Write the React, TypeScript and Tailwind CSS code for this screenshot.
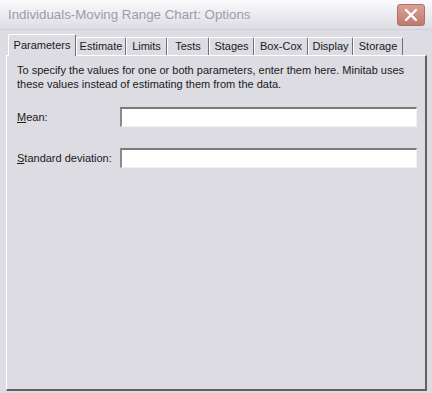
import React from 'react';

const tabs = [
  { label: 'Parameters', w: 'w-[68px]' },
  { label: 'Estimate', w: 'w-[50px]' },
  { label: 'Limits', w: 'w-[41px]' },
  { label: 'Tests', w: 'w-[42px]' },
  { label: 'Stages', w: 'w-[45px]' },
  { label: 'Box-Cox', w: 'w-[54px]' },
  { label: 'Display', w: 'w-[45px]' },
  { label: 'Storage', w: 'w-[50px]' },
];

function Field({ label, hot, rest }: { label: string; hot: string; rest: string }) {
  return (
    <div className="flex items-center h-[20px]" aria-label={label}>
      <div className="w-[103px] text-[11px] text-[#1a1a1a]">
        <span className="underline">{hot}</span>
        {rest}
      </div>
      <input
        className="w-[297px] h-[20px] bg-white border-t-2 border-l-2 border-b border-r border-t-[#7a7a7a] border-l-[#8a8a8a] border-b-[#f4f4e6] border-r-[#f4f4e6] outline-none"
        type="text"
      />
    </div>
  );
}

export default function App() {
  return (
    <div className="w-[432px] h-[393px] flex flex-col bg-[#dcdce2] font-['Liberation_Sans',Arial,sans-serif] overflow-hidden">
      <div className="h-[30px] flex items-center justify-between pl-[8px] pr-[7px] bg-gradient-to-b from-[#fbfbfd] via-[#ececf1] to-[#dcdce3] border-b border-[#d0d0d8]">
        <span className="text-[13.3px] text-[#9c9cab]">Individuals-Moving Range Chart: Options</span>
        <div className="w-[28px] h-[22px] rounded-[3px] bg-gradient-to-b from-[#d9a296] to-[#bd7a6e] border border-[#b07064] flex items-center justify-center">
          <svg width="14" height="14" viewBox="0 0 14 14">
            <path d="M2 2 L12 12 M12 2 L2 12" stroke="white" strokeWidth="2.4" strokeLinecap="round" />
          </svg>
        </div>
      </div>

      <div className="flex-1 flex flex-col pl-[6px] pr-[5px] pt-[4px] pb-[2px]">
        <div className="flex items-end h-[21px] pl-[2px]">
          {tabs.map((t, i) =>
            i === 0 ? (
              <div
                key={t.label}
                className={`${t.w} h-[22px] -mb-[1px] relative z-10 bg-[#dcdce2] border-t border-l border-white border-r border-r-[#6f6f78] rounded-t-[2px] flex items-start justify-center pt-[2px] text-[11px] text-[#1a1a1a]`}
              >
                {t.label}
              </div>
            ) : (
              <div
                key={t.label}
                className={`${t.w} h-[18px] bg-[#dcdce2] border-t border-l border-white border-r border-r-[#6f6f78] rounded-t-[2px] flex items-center justify-center text-[11px] text-[#1a1a1a]`}
              >
                {t.label}
              </div>
            )
          )}
        </div>

        <div className="flex-1 border-t border-l border-white border-r-2 border-b-2 border-r-[#5f6360] border-b-[#5f6360] pl-[10px] pt-[7px]">
          <p className="text-[11px] leading-[14px] text-[#1a1a1a]">
            To specify the values for one or both parameters, enter them here. Minitab uses
            <br />
            these values instead of estimating them from the data.
          </p>
          <div className="mt-[16px] flex flex-col gap-[21px]">
            <Field label="Mean" hot="M" rest="ean:" />
            <Field label="Standard deviation" hot="S" rest="tandard deviation:" />
          </div>
        </div>
      </div>
    </div>
  );
}
